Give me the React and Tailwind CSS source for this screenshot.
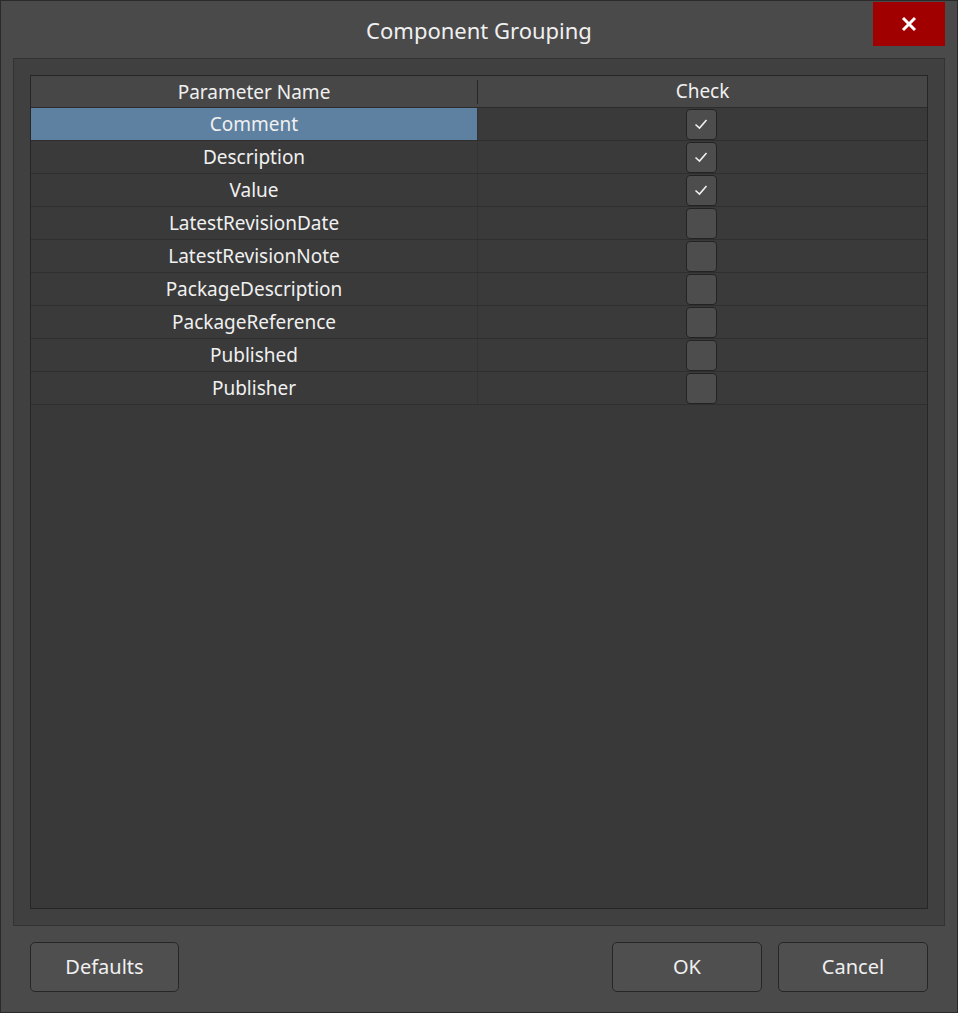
const ROWS = [
  ["Comment", true],
  ["Description", true],
  ["Value", true],
  ["LatestRevisionDate", false],
  ["LatestRevisionNote", false],
  ["PackageDescription", false],
  ["PackageReference", false],
  ["Published", false],
  ["Publisher", false],
];

function Box({ checked }) {
  return (
    <div className="w-[31px] h-[31px] rounded-[4px] border border-[#232323] bg-[#4d4d4d] flex items-center justify-center">
      {checked && (
        <svg width="16" height="16" viewBox="0 0 16 16" fill="none" stroke="#f0f0f0" strokeWidth="1.6">
          <path d="M2.5 8.5 L6.5 12 L13.5 4" />
        </svg>
      )}
    </div>
  );
}

export default function App() {
  return (
    <div className="w-[958px] h-[1013px] bg-[#4a4a4a] border border-[#2a2a2a] flex flex-col text-[#f0f0f0]" style={{ fontFamily: "'Noto Sans', 'Open Sans', sans-serif" }}>
      <div className="h-[57px] flex items-start relative shrink-0">
        <div className="flex-1 text-center text-[22px] pt-[13px]">Component Grouping</div>
        <div className="absolute right-[12px] top-[1px] w-[72px] h-[44px] bg-[#a00000] flex items-center justify-center">
          <svg width="18" height="18" viewBox="0 0 18 18" stroke="#fff" strokeWidth="3">
            <path d="M3 3 L15 15 M15 3 L3 15" />
          </svg>
        </div>
      </div>
      <div className="mx-[12px] h-[868px] bg-[#404040] border border-[#333] p-[16px]">
        <div className="h-full bg-[#393939] border border-[#262626] flex flex-col text-[19px]">
          <div className="h-[32px] bg-[#474747] flex items-center shrink-0 border-b border-[#2c2c2c]">
            <div className="w-[447px] text-center border-r border-[#262626] h-[24px] leading-[24px]">Parameter Name</div>
            <div className="flex-1 text-center">Check</div>
          </div>
          {ROWS.map(([name, c], i) => (
            <div key={name} className="h-[33px] flex border-b border-[#2f2f2f]">
              <div className={`w-[447px] flex items-center justify-center border-r border-[#333] ${i === 0 ? "bg-[#5f81a1]" : "bg-[#3a3a3a]"}`}>{name}</div>
              <div className="flex-1 flex items-center justify-center bg-[#3a3a3a] pr-[3px]">
                <Box checked={c} />
              </div>
            </div>
          ))}
        </div>
      </div>
      <div className="flex px-[29px] pt-[16px] text-[20px]">
        <button className="w-[149px] h-[50px] rounded-[5px] border border-[#262626] bg-[#4f4f4f]">Defaults</button>
        <div className="flex-1" />
        <button className="w-[150px] h-[50px] rounded-[5px] border border-[#262626] bg-[#4f4f4f]">OK</button>
        <button className="ml-[16px] w-[150px] h-[50px] rounded-[5px] border border-[#262626] bg-[#4f4f4f]">Cancel</button>
      </div>
    </div>
  );
}
